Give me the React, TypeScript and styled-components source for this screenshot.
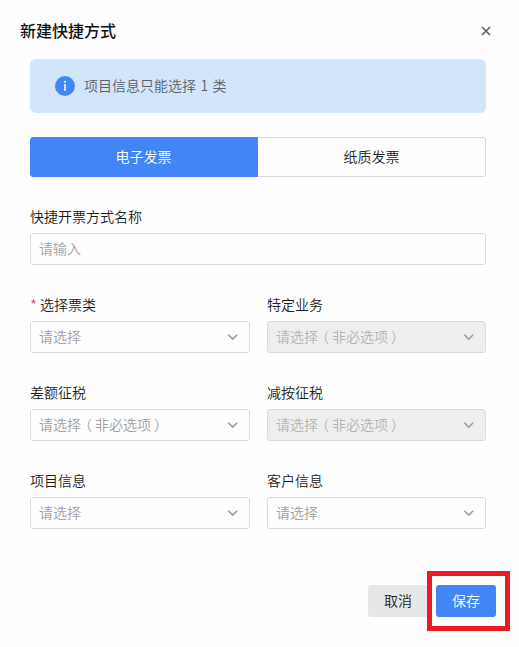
import React from "react";
import styled, { createGlobalStyle, css } from "styled-components";

const GlobalStyle = createGlobalStyle`
  * { box-sizing: border-box; }
  body {
    margin: 0;
    background: #fefefe;
    font-family: "Noto Sans CJK SC", sans-serif;
    font-size: 14px;
    font-weight: 350;
    color: #1c1c1c;
  }
  button, input { font: inherit; }
`;

const Dialog = styled.div`
  width: 519px;
  height: 647px;
  display: flex;
  flex-direction: column;
  overflow: hidden;
`;

const Header = styled.header`
  height: 59px;
  flex: none;
  padding: 3px 28px 0 20px;
  display: flex;
  align-items: center;
  justify-content: space-between;
`;

const Title = styled.h1`
  margin: 0;
  padding-bottom: 2px;
  font-size: 16px;
  line-height: 24px;
  font-weight: 500;
  color: #111;
`;

const CloseButton = styled.button`
  display: flex;
  padding: 0;
  border: 0;
  background: none;
  color: #555;
`;

const Body = styled.main`
  width: 456px;
  margin-left: 30px;
  display: flex;
  flex-direction: column;
`;

const Notice = styled.div`
  height: 54px;
  padding-left: 25px;
  display: flex;
  align-items: center;
  gap: 9px;
  border-radius: 6px;
  background: #d2e6fb;
  color: #5a6068;
`;

const NoticeText = styled.span`
  padding-bottom: 2px;
  word-spacing: 1.3px;
`;

const Tabs = styled.div`
  height: 40px;
  margin-top: 24px;
  display: grid;
  grid-template-columns: 1fr 1fr;
`;

const Tab = styled.button<{ $active?: boolean }>`
  padding: 0 0 2px;
  border: 1px solid #dadbdc;
  ${({ $active }) =>
    $active
      ? css`
          padding-right: 1px;
          background: #4285f5;
          border-color: #4285f5;
          color: #fff;
          border-radius: 3px 0 0 3px;
        `
      : css`
          background: #fefefe;
          border-left: 0;
          color: #1c1c1c;
          border-radius: 0 3px 3px 0;
        `}
`;

const Form = styled.div`
  margin-top: 28px;
  display: grid;
  grid-template-columns: 220px 219px;
  column-gap: 17px;
  row-gap: 28px;
`;

const Field = styled.div<{ $wide?: boolean }>`
  height: 60px;
  grid-column: ${({ $wide }) => ($wide ? "1 / -1" : "auto")};
`;

const Label = styled.label`
  height: 28px;
  display: flex;
  align-items: center;
  padding-bottom: 6px;
`;

const Required = styled.span`
  width: 10px;
  padding-top: 2px;
  font-size: 15px;
  line-height: 20px;
  color: #d9536f;
`;

const boxStyle = css`
  width: 100%;
  height: 32px;
  border: 1px solid #dadbdc;
  border-radius: 3px;
  background: #fefefe;
`;

const TextInput = styled.input`
  ${boxStyle}
  display: block;
  padding: 0 8px 2px;
  outline: none;
  &::placeholder { color: #a3a3a3; opacity: 1; }
`;

const SelectBox = styled.div<{ $disabled?: boolean }>`
  ${boxStyle}
  display: flex;
  align-items: center;
  justify-content: space-between;
  padding: 0 11px 0 8px;
  color: ${({ $disabled }) => ($disabled ? "#b4b4b4" : "#a0a0a0")};
  ${({ $disabled }) => $disabled && "background: #eeeeee;"}
`;

const Placeholder = styled.span`
  padding-bottom: 2px;
  white-space: nowrap;
`;

const Open = styled.span`
  margin: 0 3px 0 -3px;
`;

const Close = styled.span`
  margin: 0 -3px 0 3px;
`;

const Footer = styled.footer`
  margin-top: 42px;
  padding-right: 9px;
  display: flex;
  align-items: center;
  justify-content: flex-end;
`;

const Button = styled.button<{ $primary?: boolean }>`
  width: 60px;
  height: 32px;
  padding: 0 0 2px;
  border: 0;
  border-radius: 3px;
  background: ${({ $primary }) => ($primary ? "#4285f5" : "#e7e7e7")};
  color: ${({ $primary }) => ($primary ? "#fff" : "#1c1c1c")};
`;

const Highlight = styled.div`
  width: 83px;
  height: 60px;
  margin-left: -1px;
  display: flex;
  padding: 9px 0 0 4px;
  border: 5px solid #ea1c24;
  background: #fefefe;
`;

function InfoIcon() {
  return (
    <svg width="20" height="20" viewBox="0 0 20 20">
      <circle cx="10" cy="10" r="10" fill="#4285f5" />
      <path d="M10 8v7" stroke="#e8f1ff" strokeWidth="1.7" />
      <circle cx="10" cy="5.8" r="1.1" fill="#e8f1ff" />
    </svg>
  );
}

function CloseIcon() {
  return (
    <svg width="10" height="10" viewBox="0 0 10 10" fill="none" stroke="currentColor">
      <path d="M1 1l8 8M9 1L1 9" strokeWidth="1.5" />
    </svg>
  );
}

function Chevron() {
  return (
    <svg width="11" height="8" viewBox="0 0 11 8" fill="none" stroke="#9b9b9b">
      <path d="M1.2 1.7l4.5 4.4 4.5-4.4" strokeWidth="1.5" />
    </svg>
  );
}

interface SelectProps {
  label: string;
  required?: boolean;
  optional?: boolean;
  disabled?: boolean;
}

function SelectField({ label, required, optional, disabled }: SelectProps) {
  return (
    <Field>
      <Label>
        {required && <Required>*</Required>}
        {label}
      </Label>
      <SelectBox $disabled={disabled}>
        <Placeholder>
          请选择
          {optional && (
            <>
              <Open>（</Open>非必选项<Close>）</Close>
            </>
          )}
        </Placeholder>
        <Chevron />
      </SelectBox>
    </Field>
  );
}

const fields: SelectProps[] = [
  { label: "选择票类", required: true },
  { label: "特定业务", optional: true, disabled: true },
  { label: "差额征税", optional: true },
  { label: "减按征税", optional: true, disabled: true },
  { label: "项目信息" },
  { label: "客户信息" },
];

export default function App() {
  return (
    <Dialog>
      <GlobalStyle />
      <Header>
        <Title>新建快捷方式</Title>
        <CloseButton aria-label="关闭">
          <CloseIcon />
        </CloseButton>
      </Header>
      <Body>
        <Notice>
          <InfoIcon />
          <NoticeText>项目信息只能选择 1 类</NoticeText>
        </Notice>
        <Tabs>
          <Tab $active>电子发票</Tab>
          <Tab>纸质发票</Tab>
        </Tabs>
        <Form>
          <Field $wide>
            <Label>快捷开票方式名称</Label>
            <TextInput placeholder="请输入" />
          </Field>
          {fields.map((field) => (
            <SelectField key={field.label} {...field} />
          ))}
        </Form>
      </Body>
      <Footer>
        <Button>取消</Button>
        <Highlight>
          <Button $primary>保存</Button>
        </Highlight>
      </Footer>
    </Dialog>
  );
}
